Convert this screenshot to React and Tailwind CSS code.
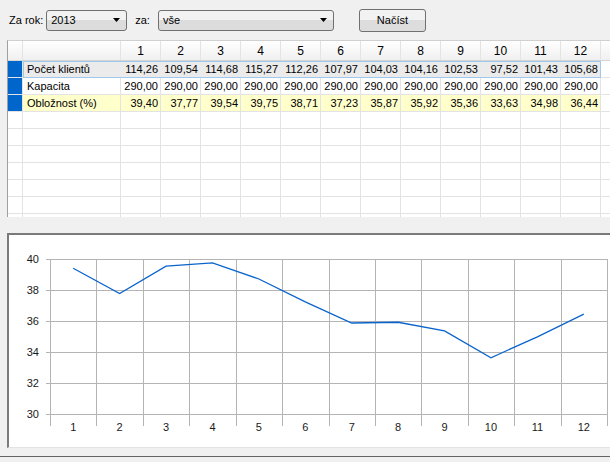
import React from "react";

const values = [39.4, 37.77, 39.54, 39.75, 38.71, 37.23, 35.87, 35.92, 35.36, 33.63, 34.98, 36.44];
const klienti = ["114,26", "109,54", "114,68", "115,27", "112,26", "107,97", "104,03", "104,16", "102,53", "97,52", "101,43", "105,68"];
const months = [1, 2, 3, 4, 5, 6, 7, 8, 9, 10, 11, 12];

const fmt = (v) => v.toFixed(2).replace(".", ",");

const Arrow = () => (
  <svg width="7" height="4" viewBox="0 0 7 4">
    <polygon points="0,0 7,0 3.5,4" fill="#000" />
  </svg>
);

const Combo = ({ value, width }) => (
  <div
    className={`h-[21px] ${width} rounded-[3px] border border-[#707070] bg-gradient-to-b from-[#f2f2f2] from-50% to-[#dcdcdc] to-50% flex items-center pl-[4px] pr-[6px]`}
  >
    <span className="flex-1">{value}</span>
    <Arrow />
  </div>
);

const Row = ({ head, name, cells, kind }) => {
  const rowBg = kind === "sel" ? "bg-[#ebebeb]" : kind === "yel" ? "bg-[#ffffcc]" : "bg-white";
  return (
    <div className="flex h-[17px] shrink-0">
      <div className={`w-[15px] border-r border-b border-[#e3e3e3] ${head ? "bg-[#0066cc]" : "bg-white"}`} />
      <div
        className={`flex ${rowBg} ${
          kind === "sel" ? "outline outline-1 outline-[#9fc8ee] -outline-offset-1" : ""
        }`}
      >
        <div
          className={`w-[98px] pl-[4px] leading-[16px] border-b border-r ${
            kind === "sel" ? "border-transparent" : "border-[#e3e3e3]"
          }`}
        >
          {name}
        </div>
        {months.map((m, i) => (
          <div
            key={m}
            className={`w-[40px] pr-[2px] text-right leading-[16px] border-b border-r ${
              kind === "sel" ? "border-transparent" : "border-[#e3e3e3]"
            }`}
          >
            {cells ? cells[i] : ""}
          </div>
        ))}
      </div>
      <div className="flex-1 bg-white border-b border-[#e3e3e3]" />
    </div>
  );
};

const Chart = () => {
  const x0 = 50;
  const x1 = 607;
  const yTop = 259;
  const yBot = 414;
  const cw = (x1 - x0) / 12;
  const yOf = (v) => yBot - (v - 30) * ((yBot - yTop) / 10);
  const pts = values.map((v, i) => `${x0 + (i + 0.5) * cw},${yOf(v)}`).join(" ");
  return (
    <svg width="601" height="212" viewBox="9 235 601 212" className="block">
      {[40, 38, 36, 34, 32, 30].map((t) => (
        <g key={t}>
          <line x1="46" x2={x1} y1={yOf(t)} y2={yOf(t)} stroke="#b4b4b4" strokeWidth="1" shapeRendering="crispEdges" />
          <text x="39" y={yOf(t) + 4} textAnchor="end" fontSize="11" fill="#1a1a1a" fontFamily="Liberation Sans, Arial, sans-serif">
            {t}
          </text>
        </g>
      ))}
      {Array.from({ length: 13 }, (_, i) => (
        <line
          key={i}
          x1={Math.round(x0 + i * cw)}
          x2={Math.round(x0 + i * cw)}
          y1={yTop}
          y2="426"
          stroke="#b4b4b4"
          strokeWidth="1"
          shapeRendering="crispEdges"
        />
      ))}
      {months.map((m, i) => (
        <text
          key={m}
          x={x0 + (i + 0.5) * cw}
          y="431"
          textAnchor="middle"
          fontSize="11"
          fill="#1a1a1a"
          fontFamily="Liberation Sans, Arial, sans-serif"
        >
          {m}
        </text>
      ))}
      <polyline points={pts} fill="none" stroke="#0a64cc" strokeWidth="1.3" />
    </svg>
  );
};

export default function App() {
  return (
    <div
      className="w-[610px] h-[462px] bg-[#f0f0f0] text-[11px] text-black overflow-hidden flex flex-col"
      style={{ fontFamily: "'Liberation Sans', Arial, sans-serif" }}
    >
      {/* toolbar */}
      <div className="h-[40px] flex items-center shrink-0">
        <span className="ml-[9px] mr-[3px]">Za rok:</span>
        <Combo value="2013" width="w-[81px]" />
        <span className="ml-[8px] mr-[8px]">za:</span>
        <Combo value="vše" width="w-[176px]" />
        <button className="ml-[25px] h-[23px] w-[67px] rounded-[3px] border border-[#707070] bg-gradient-to-b from-[#f2f2f2] from-50% to-[#dddddd] to-50% text-[11px]">
          Načíst
        </button>
      </div>

      {/* grid */}
      <div className="ml-[7px] h-[177px] shrink-0 border-t border-t-[#d0d0d0] border-l border-l-[#a0a0a0] bg-white flex flex-col overflow-hidden">
        <div className="flex h-[20px] shrink-0 bg-gradient-to-b from-white to-[#f0f0f0] border-b border-[#d5d5d5]">
          <div className="w-[15px] border-r border-[#e3e3e3]" />
          <div className="w-[98px] border-r border-[#e3e3e3]" />
          {months.map((m) => (
            <div key={m} className="w-[40px] border-r border-[#e3e3e3] flex items-center justify-center text-[12px]">
              {m}
            </div>
          ))}
          <div className="flex-1" />
        </div>
        <Row head name="Počet klientů" cells={klienti} kind="sel" />
        <Row head name="Kapacita" cells={months.map(() => "290,00")} />
        <Row head name="Obložnost (%)" cells={values.map(fmt)} kind="yel" />
        {Array.from({ length: 7 }, (_, i) => (
          <Row key={i} />
        ))}
      </div>

      {/* chart panel */}
      <div className="ml-[7px] mt-[16px] h-[215px] shrink-0 border-t-2 border-l-2 border-t-[#7a7a7a] border-l-[#7a7a7a] border-b border-b-[#e3e3e3] bg-white">
        <Chart />
      </div>

      <div className="mt-[8px] h-[1px] bg-[#646464] shrink-0" />
    </div>
  );
}
